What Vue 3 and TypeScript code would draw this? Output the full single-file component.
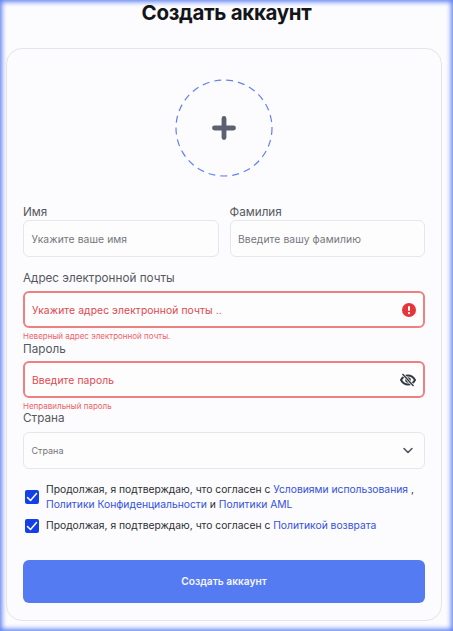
<script setup lang="ts">
const names = [
  { label: 'Имя', placeholder: 'Укажите ваше имя' },
  { label: 'Фамилия', placeholder: 'Введите вашу фамилию' },
];
</script>

<template>
  <div class="page">
    <h1 class="title">Создать аккаунт</h1>
    <div class="card">
      <div class="avatar-wrap">
        <div class="avatar">
          <svg class="ring" width="98" height="98" viewBox="0 0 98 98"><circle cx="49" cy="49" r="48" fill="none" stroke="#5f82f2" stroke-width="1.2" stroke-dasharray="7 5" /></svg>
          <svg width="24" height="24" viewBox="0 0 24 24"><path d="M12 2.5v19M2.5 12h19" stroke="#5c6070" stroke-width="4.8" stroke-linecap="round" fill="none" /></svg>
        </div>
      </div>
      <div class="name-row">
        <div v-for="n in names" :key="n.label" class="name-col">
          <div class="label name-label">{{ n.label }}</div>
          <div class="input"><span class="ph">{{ n.placeholder }}</span></div>
        </div>
      </div>
      <div class="label email-label">Адрес электронной почты</div>
      <div class="input error">
        <span class="ph-err">Укажите адрес электронной почты ..</span>
        <svg width="14" height="14" viewBox="0 0 14 14"><circle cx="7" cy="7" r="7" fill="#e5343a" /><rect x="6" y="3" width="2" height="5" rx="1" fill="#fff" /><circle cx="7" cy="10.2" r="1.1" fill="#fff" /></svg>
      </div>
      <div class="err-text">Неверный адрес электронной почты.</div>
      <div class="label pass-label">Пароль</div>
      <div class="input error">
        <span class="ph-err">Введите пароль</span>
        <svg width="16" height="14" viewBox="0 0 16 14"><path d="M1 7c1.7-3 4-4.5 7-4.5S13.3 4 15 7c-1.7 3-4 4.5-7 4.5S2.7 10 1 7z" fill="none" stroke="#33383f" stroke-width="2" /><circle cx="8" cy="7" r="2.8" fill="#33383f" /><path d="M2.5 1l11 12" stroke="#fff" stroke-width="2.6" /><path d="M2.5 1l11 12" stroke="#33383f" stroke-width="1.4" /></svg>
      </div>
      <div class="err-text">Неправильный пароль</div>
      <div class="label country-label">Страна</div>
      <div class="input">
        <span class="ph small">Страна</span>
        <svg class="chev" width="12" height="8" viewBox="0 0 12 8"><path d="M2 1.5l4 4 4-4" fill="none" stroke="#4a4e58" stroke-width="1.5" stroke-linecap="round" stroke-linejoin="round" /></svg>
      </div>
      <div class="check-row first">
        <span class="box"><svg width="12" height="10" viewBox="0 0 12 10"><path d="M1.5 5.5l3 3 6-7" fill="none" stroke="#fff" stroke-width="1.5" stroke-linecap="round" stroke-linejoin="round" /></svg></span>
        <p class="check-text">Продолжая, я подтверждаю, что согласен с <a>Условиями использования</a> , <a>Политики Конфиденциальности</a> и <a>Политики AML</a></p>
      </div>
      <div class="check-row second">
        <span class="box"><svg width="12" height="10" viewBox="0 0 12 10"><path d="M1.5 5.5l3 3 6-7" fill="none" stroke="#fff" stroke-width="1.5" stroke-linecap="round" stroke-linejoin="round" /></svg></span>
        <p class="check-text">Продолжая, я подтверждаю, что согласен с <a>Политикой возврата</a></p>
      </div>
      <button class="submit" type="button">Создать аккаунт</button>
    </div>
  </div>
</template>

<style>
html, body { margin: 0; padding: 0; }
</style>

<style scoped>
.page {
  box-sizing: border-box;
  width: 453px;
  height: 631px;
  overflow: hidden;
  padding: 0 11px 10px 6px;
  background: #fcfcff;
  box-shadow: inset 0 0 5px 2px #5f82f2;
  font-family: "Inter", "Noto Sans", sans-serif;
}
.title {
  margin: 0;
  height: 48px;
  box-sizing: border-box;
  padding-left: 5px;
  font-size: 20.5px;
  line-height: 26px;
  font-weight: 700;
  letter-spacing: -0.3px;
  color: #14151a;
  text-align: center;
}
.card {
  box-sizing: border-box;
  height: 573px;
  border: 1px solid #e4e5ea;
  border-radius: 16px;
  padding: 30px 16px 0 16px;
  background: #fcfcfe;
}
.avatar-wrap { display: flex; justify-content: center; height: 125px; }
.avatar {
  position: relative;
  width: 98px;
  height: 98px;
  display: flex;
  align-items: center;
  justify-content: center;
}
.ring { position: absolute; inset: 0; }
.name-row { display: flex; gap: 11px; }
.name-col { flex: 1; min-width: 0; }
.label {
  font-size: 11.7px;
  line-height: 16px;
  color: #55585f;
}
.name-label { height: 16px; }
.email-label { margin-top: 13px; height: 21px; }
.pass-label { height: 20px; }
.country-label { height: 21px; line-height: 14px; }
.input {
  box-sizing: border-box;
  height: 37px;
  border: 1.5px solid #e6e7ea;
  border-radius: 6px;
  padding: 0 8px 0 7.5px;
  display: flex;
  align-items: center;
  justify-content: space-between;
  background: #fdfdfe;
}
.ph { font-size: 10.3px; color: #74767c; letter-spacing: 0.1px; white-space: nowrap; }
.ph.small { font-size: 9px; letter-spacing: 0; }
.error { border: 2px solid #ee8082; padding: 0 7px; }
.ph-err { font-size: 10.3px; color: #e2474d; letter-spacing: 0.1px; white-space: nowrap; }
.chev { margin-right: 2px; }
.err-text {
  font-size: 8px;
  line-height: 10px;
  color: #ee6468;
  margin-top: 3px;
  height: 10px;
}
.check-row { display: flex; align-items: center; margin-left: 2px; }
.first { margin-top: 13px; }
.second { margin-top: 6px; }
.box {
  flex: none;
  box-sizing: border-box;
  width: 14px;
  height: 14px;
  border-radius: 2px;
  background: #1440e8;
  display: flex;
  align-items: center;
  justify-content: center;
  margin-right: 7px;
}
.check-text {
  margin: 0;
  font-size: 10.3px;
  line-height: 15px;
  color: #2c2e33;
}
.check-text a { color: #3350e0; }
.submit {
  display: block;
  width: 100%;
  height: 43px;
  margin-top: 27px;
  padding-bottom: 2px;
  border: 0;
  border-radius: 6px;
  background: #557bf2;
  color: #f4f6ff;
  font: 600 10.2px "Inter", "Noto Sans", sans-serif;
}
</style>
